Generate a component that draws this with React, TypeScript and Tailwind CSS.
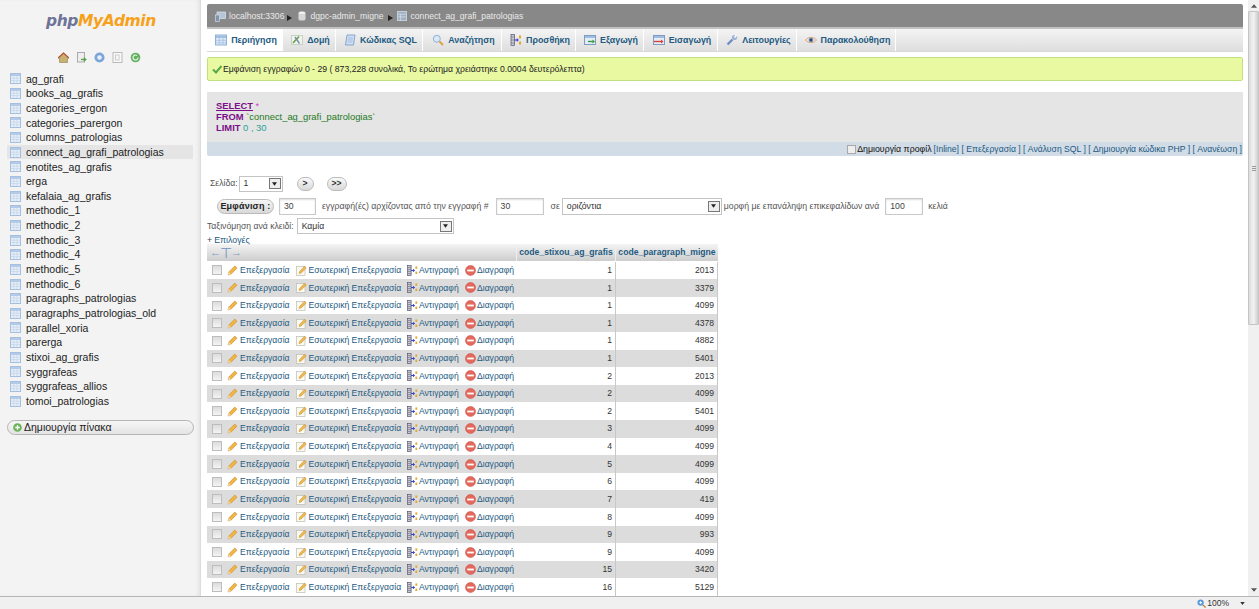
const tables = ["ag_grafi","books_ag_grafis","categories_ergon","categories_parergon","columns_patrologias","connect_ag_grafi_patrologias","enotites_ag_grafis","erga","kefalaia_ag_grafis","methodic_1","methodic_2","methodic_3","methodic_4","methodic_5","methodic_6","paragraphs_patrologias","paragraphs_patrologias_old","parallel_xoria","parerga","stixoi_ag_grafis","syggrafeas","syggrafeas_allios","tomoi_patrologias"];
const rows: [number, number][] = [[1,2013],[1,3379],[1,4099],[1,4378],[1,4882],[1,5401],[2,2013],[2,4099],[2,5401],[3,4099],[4,4099],[5,4099],[6,4099],[7,419],[8,4099],[9,993],[9,4099],[15,3420],[16,5129]];

function TableIcon({ className = "" }: { className?: string }) {
  return (
    <svg viewBox="0 0 11 11" className={`w-[11px] h-[11px] shrink-0 ${className}`}>
      <rect x="0.5" y="0.5" width="10" height="10" fill="#e6eef8" stroke="#a4bfdf" />
      <rect x="1" y="1" width="9" height="2" fill="#b4cbe7" />
      <path d="M1 5.2h9M1 7.6h9M3.8 3v7M7 3v7" stroke="#c6d7ea" strokeWidth="0.8" />
    </svg>
  );
}
function Pencil() {
  return (
    <svg viewBox="0 0 11 11" className="w-[11px] h-[11px] shrink-0">
      <path d="M1 10l0.8-3L7.8 1l2.2 2.2-6 6z" fill="#f2b544" stroke="#c58a2a" strokeWidth="0.6" />
      <path d="M1 10l0.8-3 2.2 2.2z" fill="#f3dfb8" />
    </svg>
  );
}
function InlinePencil() {
  return (
    <svg viewBox="0 0 11 11" className="w-[11px] h-[11px] shrink-0">
      <rect x="0.5" y="1.5" width="8.5" height="9" fill="#fbfaf2" stroke="#bdbdb0" strokeWidth="0.7" />
      <path d="M3 8.5l0.6-2L8.5 1.2 10.2 3l-5 5z" fill="#f0b94d" stroke="#c58a2a" strokeWidth="0.5" />
    </svg>
  );
}
function CopyIcon() {
  return (
    <svg viewBox="0 0 11 11" className="w-[11px] h-[11px] shrink-0">
      <rect x="0.5" y="0.5" width="3.6" height="10" fill="#c9c9d2" stroke="#55556a" strokeWidth="0.7" />
      <path d="M1 2.5h3M1 4.5h3M1 6.5h3M1 8.5h3" stroke="#55556a" strokeWidth="0.5" />
      <path d="M4 5.5h3.5" stroke="#3a45c9" strokeWidth="1.1" />
      <path d="M6 3.8l2 1.7-2 1.7z" fill="#3a45c9" />
      <rect x="8.4" y="1.4" width="1.8" height="2.4" fill="#e0a92c" />
      <rect x="8.4" y="6.6" width="1.8" height="2.4" fill="#e0a92c" />
    </svg>
  );
}
function DeleteIcon() {
  return (
    <svg viewBox="0 0 11 11" className="w-[11px] h-[11px] shrink-0">
      <circle cx="5.5" cy="5.5" r="5" fill="#e2695e" stroke="#d0473c" strokeWidth="0.5" />
      <rect x="2.2" y="4.6" width="6.6" height="1.8" fill="#fff" />
    </svg>
  );
}
function Check() {
  return <span className="w-[10px] h-[10px] shrink-0 border border-[#bdbdbd] bg-gradient-to-b from-[#dcdcdc] to-[#f4f4f4]" />;
}
function Arrow() {
  return <svg viewBox="0 0 5 6" className="w-[5px] h-[6px] shrink-0 mt-[3px]"><path d="M0 0l5 3-5 3z" fill="#222" /></svg>;
}
function SelectBox({ text, className }: { text: string; className: string }) {
  return (
    <div className={`flex items-center justify-between border border-[#c4c4c4] bg-white pl-[4px] pr-[1px] text-[#333] ${className}`}>
      <span>{text}</span>
      <span className="w-[12px] h-[11px] flex items-center justify-center border border-[#777] bg-[#eee]">
        <svg viewBox="0 0 6 4" className="w-[5px] h-[4px]"><path d="M0 0h6L3 4z" fill="#222" /></svg>
      </span>
    </div>
  );
}
function NumInput({ v, className }: { v: string; className: string }) {
  return <div className={`flex items-center border border-[#c9c9c9] bg-white pl-[4px] text-[#444] shadow-[inset_0_1px_2px_#ddd] ${className}`}>{v}</div>;
}

const tabIcons: React.ReactNode[] = [
  <svg key="0" viewBox="0 0 12 12" className="w-[12px] h-[12px]"><rect x="0.5" y="1" width="11" height="10" fill="#dbe7f6" stroke="#8fb0d6" /><rect x="1" y="1.5" width="10" height="2.4" fill="#9fbde0" /><path d="M4.3 4v7M8 4v7M1 6.4h10M1 8.8h10" stroke="#a9c3e3" strokeWidth="0.8" /></svg>,
  <svg key="1" viewBox="0 0 12 12" className="w-[12px] h-[12px]"><rect x="0.5" y="1.5" width="11" height="9" fill="#eef4ee" stroke="#c6d2c6" /><path d="M2 9l6-6.5" stroke="#69a23f" strokeWidth="1.6" /><path d="M4 3l4.5 6.5" stroke="#7d8ca8" strokeWidth="1.4" /></svg>,
  <svg key="2" viewBox="0 0 12 12" className="w-[12px] h-[12px]"><path d="M3 1h8L9.500 11h-8z" fill="#cfe0f4" stroke="#6f95c4" strokeWidth="0.8" /><path d="M4 4h5M3.800 6h5M3.500 8h5" stroke="#8fb0d6" strokeWidth="0.7" /></svg>,
  <svg key="3" viewBox="0 0 12 12" className="w-[12px] h-[12px]"><circle cx="4.800" cy="4.800" r="3.500" fill="#dbe9f7" stroke="#8fb0d6" /><path d="M7.500 7.500l3.500 3.500" stroke="#e0a040" strokeWidth="1.800" /></svg>,
  <svg key="4" viewBox="0 0 12 12" className="w-[12px] h-[12px]"><rect x="1" y="0.5" width="3.500" height="11" fill="#c9c9d2" stroke="#55556a" strokeWidth="0.7" /><path d="M1 3h3.500M1 6h3.500M1 9h3.500" stroke="#55556a" strokeWidth="0.5" /><path d="M4.500 6h3.500" stroke="#3a45c9" strokeWidth="1.200" /><path d="M6.800 4l2 2-2 2z" fill="#3a45c9" /><rect x="9" y="1.500" width="2" height="3" fill="#e0a92c" /><rect x="9" y="7.500" width="2" height="3" fill="#e0a92c" /></svg>,
  <svg key="5" viewBox="0 0 12 12" className="w-[12px] h-[12px]"><rect x="0.5" y="1.500" width="11" height="9" fill="#e4edf7" stroke="#7f9cc0" /><rect x="1" y="2" width="10" height="2" fill="#9fbde0" /><path d="M4 7.500h6" stroke="#3c9a3c" strokeWidth="1.400" /><path d="M8.500 5.500l2.500 2-2.500 2z" fill="#3c9a3c" /></svg>,
  <svg key="6" viewBox="0 0 12 12" className="w-[12px] h-[12px]"><rect x="0.5" y="1.500" width="11" height="9" fill="#e4edf7" stroke="#7f9cc0" /><rect x="1" y="2" width="10" height="2" fill="#9fbde0" /><path d="M1 7.500h7" stroke="#d8403a" strokeWidth="1.400" /><path d="M8 5.500l2.500 2-2.500 2z" fill="#d8403a" /></svg>,
  <svg key="7" viewBox="0 0 12 12" className="w-[12px] h-[12px]"><path d="M1.500 10.500l5-5" stroke="#6f8fc4" strokeWidth="2.400" /><circle cx="8.500" cy="3.500" r="2.600" fill="#9db4d8" /><path d="M8.500 3.500l2-2.500" stroke="#fff" strokeWidth="1.400" /></svg>,
  <svg key="8" viewBox="0 0 12 12" className="w-[12px] h-[12px]"><path d="M0.500 6C3 2.500 9 2.500 11.500 6 9 9.500 3 9.500 0.500 6z" fill="#f7e3d2" stroke="#d19a70" strokeWidth="0.8" /><circle cx="6" cy="6" r="2.300" fill="#5f83b8" /><circle cx="6" cy="6" r="1" fill="#23365a" /></svg>,
];
const tabs: [string, string][] = [["Περιήγηση","w-[76px]"],["Δομή","w-[53px]"],["Κώδικας SQL","w-[87px]"],["Αναζήτηση","w-[79px]"],["Προσθήκη","w-[74px]"],["Εξαγωγή","w-[68px]"],["Εισαγωγή","w-[74px]"],["Λειτουργίες","w-[79px]"],["Παρακολούθηση","w-[99px]"]];

const sans = "font-['Liberation_Sans',Arial,sans-serif]";

export default function App() {
  return (
    <div className={`w-[1259px] h-[609px] overflow-hidden flex flex-col bg-white ${sans} text-[9px] leading-none`}>
      <div className="flex flex-1 min-h-0">
        {/* Navigation */}
        <aside className="w-[201px] shrink-0 bg-[#f3f3f3] border-r border-[#dcdcdc] shadow-[inset_-3px_0_4px_-2px_#ddd] flex flex-col pl-[7px] pr-[7px]">
          <div className="h-[19px] mt-[12px] pl-[39px] text-[15.500px] leading-[19px] font-['DejaVu_Sans',sans-serif] font-bold italic tracking-[-0.4px]">
            <span className="text-[#6f7399]">php</span><span className="text-[#f7a11a]">MyAdmin</span>
          </div>
          <div className="mt-[21px] flex items-center justify-center gap-[7px] h-[11px] pr-[2px]">
            <svg viewBox="0 0 11 11" className="w-[11px] h-[11px]"><path d="M0 6l5.500-5L11 6H9.500v4.500h-8V6z" fill="#c8b070" stroke="#8a6f3a" strokeWidth="0.5" /><path d="M0 6l5.500-5L11 6" fill="none" stroke="#b4523a" strokeWidth="1.200" /></svg>
            <svg viewBox="0 0 11 11" className="w-[11px] h-[11px]"><rect x="1.500" y="0.500" width="7" height="9.500" fill="#eee" stroke="#aaa" /><path d="M5 7.500h4" stroke="#57a04a" strokeWidth="1.400" /><path d="M7.800 5l3 2.500-3 2.500z" fill="#57a04a" /></svg>
            <svg viewBox="0 0 11 11" className="w-[11px] h-[11px]"><circle cx="5.500" cy="5.500" r="5" fill="#7ea5d8" /><circle cx="5.500" cy="5.500" r="2.300" fill="#e8eff8" /></svg>
            <svg viewBox="0 0 11 11" className="w-[11px] h-[11px]"><rect x="1" y="0.500" width="9" height="10" fill="#f8f8f8" stroke="#bbb" /><rect x="3.500" y="3" width="3.500" height="5" fill="none" stroke="#ccc" /></svg>
            <svg viewBox="0 0 11 11" className="w-[11px] h-[11px]"><circle cx="5.500" cy="5.500" r="4.800" fill="#63b161" /><path d="M8 5.500a2.500 2.500 0 1 1-1-2" fill="none" stroke="#e8f5e8" strokeWidth="1.200" /></svg>
          </div>
          <ul className="mt-[8.500px] text-[10.500px] text-[#222]">
            {tables.map((t) => (
              <li key={t} className={`h-[14.660px] flex items-center pl-[3px] gap-[5px] ${t === "connect_ag_grafi_patrologias" ? "bg-[#e5e5e5]" : ""}`}>
                <TableIcon />
                <span>{t}</span>
              </li>
            ))}
          </ul>
          <div className="mt-[11px] h-[15px] w-[187px] rounded-full border border-[#b5b5b5] bg-gradient-to-b from-[#f6f6f6] to-[#e4e4e4] flex items-center pl-[5px] gap-[2px] text-[10.500px] text-[#222]">
            <svg viewBox="0 0 10 10" className="w-[9px] h-[9px]"><circle cx="5" cy="5" r="4.800" fill="#6cb35c" /><path d="M5 2.500v5M2.500 5h5" stroke="#fff" strokeWidth="1.500" /></svg>
            <span>Δημιουργία πίνακα</span>
          </div>
        </aside>
        {/* Main */}
        <main className="flex-1 min-w-0 overflow-hidden pl-[6px] pr-[5px] pt-[4px]">
          <div className="h-[25px] pt-[1px] bg-[#888888] rounded-t-[2px] border-b-2 border-[#c2c2c2] flex items-center pl-[8px] text-[#e8e8e8] text-[8.600px]">
            <svg viewBox="0 0 11 11" className="w-[11px] h-[11px] mr-[3px]"><rect x="2" y="1" width="8.500" height="6.500" fill="#b5c4d6" stroke="#dfe6ee" strokeWidth="0.7" /><rect x="0.500" y="4" width="4" height="6.500" fill="#7f93aa" stroke="#dfe6ee" strokeWidth="0.6" /></svg>
            <span>localhost:3306</span>
            <span className="ml-[3px] mr-[6px]"><Arrow /></span>
            <svg viewBox="0 0 9 11" className="w-[8px] h-[10px] mr-[4px]"><rect x="0.500" y="0.500" width="8" height="10" rx="2" fill="#d8d8d8" /><ellipse cx="4.500" cy="2" rx="3.500" ry="1.300" fill="#f4f4f4" /></svg>
            <span>dgpc-admin_migne</span>
            <span className="ml-[4px] mr-[4px]"><Arrow /></span>
            <svg viewBox="0 0 11 11" className="w-[10px] h-[10px] mr-[4px]"><rect x="0.500" y="0.500" width="10" height="10" fill="#9fb0c5" stroke="#c9d3df" /><path d="M1 3.500h9M1 6.500h9M4 3.500v7" stroke="#dfe6ee" strokeWidth="0.7" /></svg>
            <span>connect_ag_grafi_patrologias</span>
          </div>
          <nav className="h-[23px] flex bg-gradient-to-b from-[#f4f4f4] to-[#dedede] border-b border-[#d8d8d8]">
            {tabs.map(([t, w], i) => (
              <div key={t} className={`${w} shrink-0 flex items-center justify-center gap-[4px] pl-[3px] border-r border-[#fff] text-[8.850px] font-bold text-[#235a81] ${i === 0 ? "bg-white" : ""}`}>
                {tabIcons[i]}
                <span>{t}</span>
              </div>
            ))}
          </nav>
          <div className="mt-[5px] h-[24px] bg-[#e9f9a2] border border-[#bfe27e] rounded-[2px] flex items-center pl-[4px] gap-[1px] text-[8.680px] text-[#222]">
            <svg viewBox="0 0 10 10" className="w-[10px] h-[10px]"><path d="M1 5.500l3 3L9.500 2" fill="none" stroke="#58a84a" strokeWidth="2" /></svg>
            <span>Εμφάνιση εγγραφών 0 - 29 ( 873,228 συνολικά, Το ερώτημα χρειάστηκε 0.0004 δευτερόλεπτα)</span>
          </div>
          <div className="mt-[11px] h-[50px] bg-[#e5e5e5] pl-[9px] pt-[8px] text-[9.400px] leading-[11px]">
            <div><span className="text-[#7b0f88] font-bold underline">SELECT</span> <span className="text-[#d63bd0]">*</span></div>
            <div><span className="text-[#7b0f88] font-bold">FROM</span> <span className="text-[#1e7a1e]">`connect_ag_grafi_patrologias`</span></div>
            <div><span className="text-[#7b0f88] font-bold">LIMIT</span> <span className="text-[#2aa198]">0 , 30</span></div>
          </div>
          <div className="h-[14px] bg-[#d1dce7] rounded-b-[2px] flex items-center justify-end pr-[1px] text-[8.650px] text-[#235a81]">
            <span className="w-[9px] h-[9px] border border-[#a8a8a8] bg-[#eee] mr-[1px]" />
            <span className="text-[#111] text-[8.800px] mr-[2px]">Δημιουργία προφίλ</span>
            <span>[Inline] [ Επεξεργασία ] [ Ανάλυση SQL ] [ Δημιουργία κώδικα PHP ] [ Ανανέωση ]</span>
          </div>
          <div className="mt-[19px] h-[17px] flex items-center pl-[3px] text-[8.650px] text-[#555]">
            <span className="mr-[1px]">Σελίδα:</span>
            <SelectBox text="1" className="w-[44px] h-[16px]" />
            <span className="ml-[14px] w-[17px] h-[14px] rounded-full border border-[#bbb] bg-gradient-to-b from-[#fafafa] to-[#d8d8d8] flex items-center justify-center font-bold text-[#333]">&gt;</span>
            <span className="ml-[13px] w-[20px] h-[14px] rounded-full border border-[#bbb] bg-gradient-to-b from-[#fafafa] to-[#d8d8d8] flex items-center justify-center font-bold text-[#333]">&gt;&gt;</span>
          </div>
          <div className="mt-[5px] h-[18px] flex items-center pl-[10px] text-[8.700px] text-[#555]">
            <span className="w-[57px] h-[15px] rounded-full border border-[#bbb] bg-gradient-to-b from-[#f6f6f6] to-[#d8d8d8] flex items-center justify-center font-bold text-[#222] text-[9px] tracking-[0.2px]">Εμφάνιση :</span>
            <NumInput v="30" className="ml-[5px] w-[37px] h-[17px]" />
            <span className="ml-[6px]">εγγραφή(ές) αρχίζοντας από την εγγραφή #</span>
            <NumInput v="30" className="ml-[7px] w-[48px] h-[17px]" />
            <span className="ml-[7px]">σε</span>
            <SelectBox text="οριζόντια" className="ml-[2px] w-[160px] h-[17px]" />
            <span className="ml-[2px]">μορφή με επανάληψη επικεφαλίδων ανά</span>
            <NumInput v="100" className="ml-[6px] w-[38px] h-[17px]" />
            <span className="ml-[5px]">κελιά</span>
          </div>
          <div className="mt-[3px] h-[16px] flex items-center text-[8.650px] text-[#555]">
            <span className="mr-[3px]">Ταξινόμηση ανά κλειδί:</span>
            <SelectBox text="Καμία" className="w-[157px] h-[16px]" />
          </div>
          <div className="mt-[3px] h-[7px] flex items-center text-[8.800px] text-[#235a81]"><span className="text-[#444] mr-[2px]">+</span> Επιλογές</div>
          {/* Table */}
          <div className="w-[511px] text-[8.600px]">
            <div className="grid grid-cols-[310px_99px_102px] h-[17px] font-bold text-[#235a81] text-[8.650px] bg-gradient-to-b from-[#f4f4f4] to-[#cdcdcd]">
              <div className="border-r border-[#eee] pl-[3px] flex items-center font-normal text-[#7f9cc5] text-[11px] tracking-[-1px]">
                <span>←</span><span className="text-[14px] text-[#6a90c0]">⊤</span><span>→</span>
              </div>
              <div className="border-r border-[#eee] flex items-center justify-center">code_stixou_ag_grafis</div>
              <div className="flex items-center justify-center">code_paragraph_migne</div>
            </div>
            <div className="h-[0.5px]" />
            {rows.map(([a, b], i) => (
              <div key={i} className={`grid grid-cols-[310px_99px_102px] h-[17.610px] text-[#235a81] ${i % 2 ? "bg-[#dcdcdc]" : "bg-white"}`}>
                <div className="flex items-center pl-[5px]">
                  <Check />
                  <span className="ml-[5px]"><Pencil /></span>
                  <span className="ml-[2px] w-[56px]">Επεξεργασία</span>
                  <InlinePencil />
                  <span className="ml-[1.500px] w-[98px]">Εσωτερική Επεξεργασία</span>
                  <CopyIcon />
                  <span className="ml-[1.500px] w-[45.500px]">Αντιγραφή</span>
                  <DeleteIcon />
                  <span className="ml-[1.500px]">Διαγραφή</span>
                </div>
                <div className="border-r border-[#c8c8c8] flex items-center justify-end pr-[3px] text-[#333]">{a}</div>
                <div className="border-r border-[#c8c8c8] flex items-center justify-end pr-[3px] text-[#333]">{b}</div>
              </div>
            ))}
          </div>
        </main>
        {/* Scrollbar */}
        <div className="w-[11px] shrink-0 bg-[#f0f0f0] flex flex-col items-center">
          <svg viewBox="0 0 7 4" className="w-[6px] h-[4px] mt-[4px]"><path d="M0 4h7L3.500 0z" fill="#555" /></svg>
          <div className="mt-[3px] w-full h-[314px] bg-gradient-to-r from-[#dcdcdc] via-[#f2f2f2] to-[#cfcfcf] border border-[#c4c4c4] rounded-[1px] flex flex-col items-center justify-center gap-[1px]">
            <span className="w-[4px] h-[1px] bg-[#999]" /><span className="w-[4px] h-[1px] bg-[#999]" /><span className="w-[4px] h-[1px] bg-[#999]" />
          </div>
          <div className="flex-1" />
          <svg viewBox="0 0 7 4" className="w-[6px] h-[4px] mb-[4px]"><path d="M0 0h7L3.500 4z" fill="#555" /></svg>
        </div>
      </div>
      {/* Browser status bar */}
      <div className="h-[13px] shrink-0 bg-[#f0f0f0] border-t border-[#b5b5b5] flex items-center justify-end pr-[14px] text-[8.500px] text-[#333]">
        <svg viewBox="0 0 10 10" className="w-[9px] h-[9px] mr-[1px]"><circle cx="4" cy="4" r="3.500" fill="#5a9ad8" /><path d="M6.500 6.500L9.500 9.500" stroke="#b77a3a" strokeWidth="1.400" /><path d="M2.500 4h3M4 2.500v3" stroke="#fff" /></svg>
        <span>100%</span>
        <svg viewBox="0 0 6 4" className="w-[5px] h-[3px] ml-[11px]"><path d="M0 0h6L3 4z" fill="#333" /></svg>
      </div>
    </div>
  );
}
